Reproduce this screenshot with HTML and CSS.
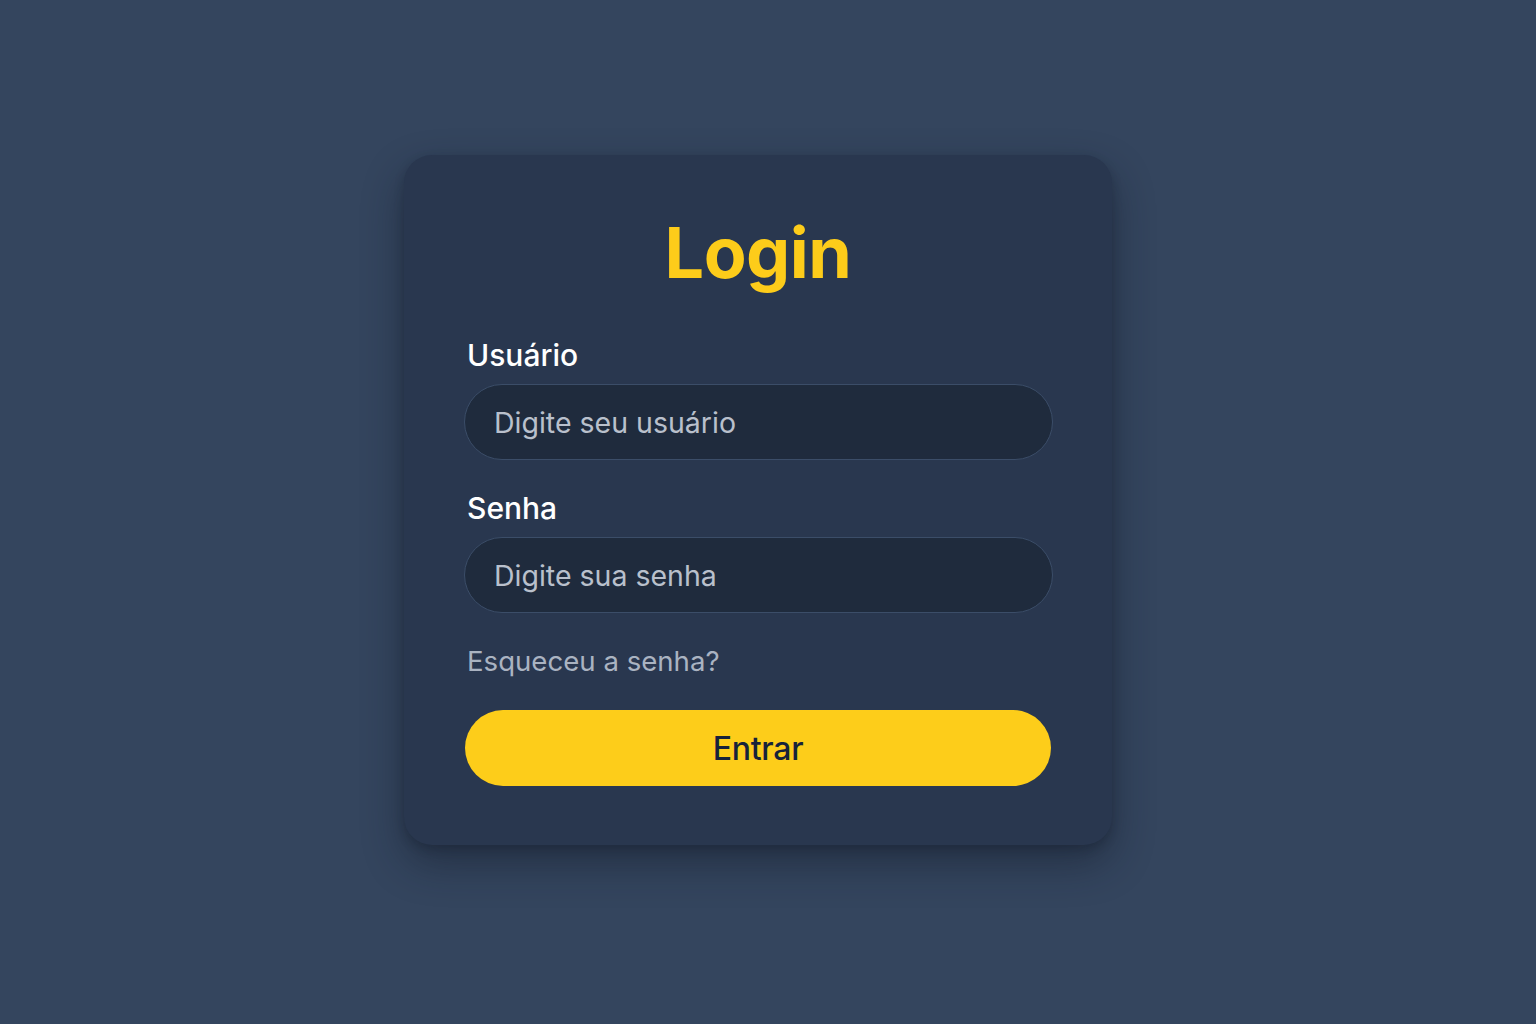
FILE: index.html
```html
<!DOCTYPE html>
<html lang="pt-BR">
<head>
<meta charset="utf-8">
<title>Login</title>
<link rel="stylesheet" href="styles.css">
</head>
<body>
<main class="page">
  <form class="card">
    <h1 class="title">Login</h1>
    <label class="label" for="user">Usuário</label>
    <input class="field" id="user" type="text" placeholder="Digite seu usuário">
    <label class="label label-second" for="pass">Senha</label>
    <input class="field" id="pass" type="password" placeholder="Digite sua senha">
    <a class="forgot" href="#">Esqueceu a senha?</a>
    <button class="submit" type="button">Entrar</button>
  </form>
</main>
</body>
</html>
```

FILE: styles.css
```css
* { box-sizing: border-box; }
html, body {
  margin: 0;
  height: 100%;
}
body {
  background: #34455e;
  font-family: Inter, "Noto Sans", "Liberation Sans", sans-serif;
}
.page {
  height: 1024px;
  display: flex;
  justify-content: center;
  align-items: flex-start;
  padding: 155px 20px 0 0;
}
.card {
  width: 708px;
  height: 690px;
  background: #29374f;
  border-radius: 28px;
  padding: 54px 60px 0 60px;
  display: flex;
  flex-direction: column;
  box-shadow: 0 18px 40px rgba(15, 22, 35, 0.45), 0 4px 10px rgba(15, 22, 35, 0.25);
}
.title {
  margin: 0 0 41px 0;
  text-align: center;
  color: #fdcc1a;
  font-size: 70px;
  font-weight: 700;
  line-height: 88px;
  letter-spacing: -0.5px;
}
.label {
  color: #ffffff;
  font-size: 30px;
  font-weight: 500;
  line-height: 34px;
  margin: 0 0 12px 3px;
}
.label-second {
  margin-top: 31px;
}
.field {
  height: 76px;
  width: 589px;
  border-radius: 38px;
  border: 1.5px solid #3b4d68;
  background: #1f2b3d;
  padding: 0 29px;
  color: #e6e9ef;
  font-family: inherit;
  font-size: 28.5px;
  outline: none;
}
.field::placeholder {
  color: #b9c0cc;
}
.forgot {
  margin: 31px 0 0 3px;
  color: #aab3c1;
  font-size: 27.6px;
  line-height: 34px;
  text-decoration: none;
}
.submit {
  margin: 32px 0 0 1px;
  height: 76px;
  width: 586px;
  border: none;
  border-radius: 38px;
  background: #fdcd1a;
  color: #17223a;
  font-family: inherit;
  font-size: 32px;
  font-weight: 500;
  letter-spacing: -0.3px;
  cursor: pointer;
}
```
